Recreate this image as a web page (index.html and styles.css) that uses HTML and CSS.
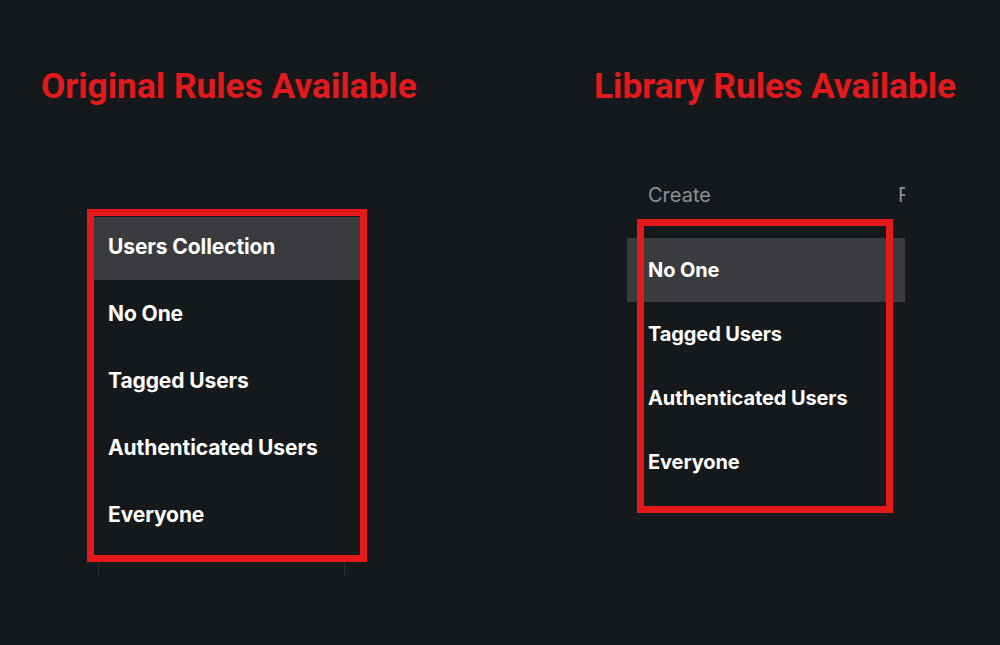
FILE: index.html
```html
<!DOCTYPE html>
<html lang="en">
<head>
  <meta charset="UTF-8" />
  <meta name="viewport" content="width=device-width, initial-scale=1.0" />
  <title>Rules Available</title>
  <link rel="stylesheet" href="styles.css">
</head>
<body>
<div id="compare">
  <div class="panel original">
    <h2 class="caption">Original Rules Available</h2>
    <ul class="rule-menu">
      <li class="selected">Users Collection</li>
      <li>No One</li>
      <li>Tagged Users</li>
      <li>Authenticated Users</li>
      <li>Everyone</li>
    </ul>
    <div class="menu-ticks"></div>
  </div>

  <div class="panel library">
    <h2 class="caption">Library Rules Available</h2>
    <div class="rules-pane">
      <div class="tabs">
        <span class="tab">Create</span>
        <span class="tab">Read</span>
      </div>
      <ul class="rule-list">
        <li class="selected">No One</li>
        <li>Tagged Users</li>
        <li>Authenticated Users</li>
        <li>Everyone</li>
      </ul>
      <div class="marker"></div>
    </div>
  </div>
</div>
</body>
</html>
```

FILE: styles.css
```css
html, body {
  margin: 0; padding: 0;
  width: 1000px; height: 645px;
  overflow: hidden;
  background: #16191c;
  font-family: Inter, 'Open Sans', sans-serif;
  color: #ffffff;
}
#compare {
  display: grid;
  grid-template-columns: 594px 1fr;
  height: 645px;
}
.caption {
  margin: 69px 0 0 0;
  font-family: Roboto, 'Liberation Sans', sans-serif;
  font-size: 35.3px;
  line-height: 35px;
  font-weight: 700;
  color: #e3191c;
  white-space: nowrap;
}
.original {
  padding-left: 41px;
}
ul {
  list-style: none;
  margin: 0;
  padding: 0;
}
.rule-menu {
  margin: 105px 0 0 46px;
  width: 266px;
  height: 338px;
  border: 7px solid #e3191c;
  padding-top: 1px;
  box-sizing: content-box;
}
.rule-menu li {
  height: 63px;
  margin-bottom: 4px;
  padding: 0 0 4px 14px;
  box-sizing: border-box;
  display: flex;
  align-items: center;
  font-size: 21px;
  font-weight: 700;
  letter-spacing: -0.1px;
}
.rule-menu li.selected {
  background: #393b3e;
}
.menu-ticks {
  margin-left: 57px;
  width: 245px;
  height: 14px;
  border-left: 1px solid #2c2f33;
  border-right: 1px solid #2c2f33;
}
.rules-pane {
  position: relative;
  margin: 79px 0 0 33px;
  width: 278px;
  padding-bottom: 30px;
  overflow: hidden;
}
.tabs {
  display: flex;
  padding-left: 21px;
  white-space: nowrap;
}
.tab {
  flex: 0 0 250px;
  font-size: 20px;
  line-height: 24px;
  color: #8b9096;
}
.rule-list {
  margin-top: 31px;
}
.rule-list li {
  height: 64px;
  padding-left: 21px;
  display: flex;
  align-items: center;
  font-size: 20px;
  font-weight: 700;
  letter-spacing: -0.1px;
}
.rule-list li.selected {
  background: #393b3e;
}
/* red outline drawn over the list */
.marker {
  position: absolute;
  left: 10px;
  top: 36px;
  width: 256px;
  height: 294px;
  border: 7px solid #e3191c;
  box-sizing: border-box;
}
```
